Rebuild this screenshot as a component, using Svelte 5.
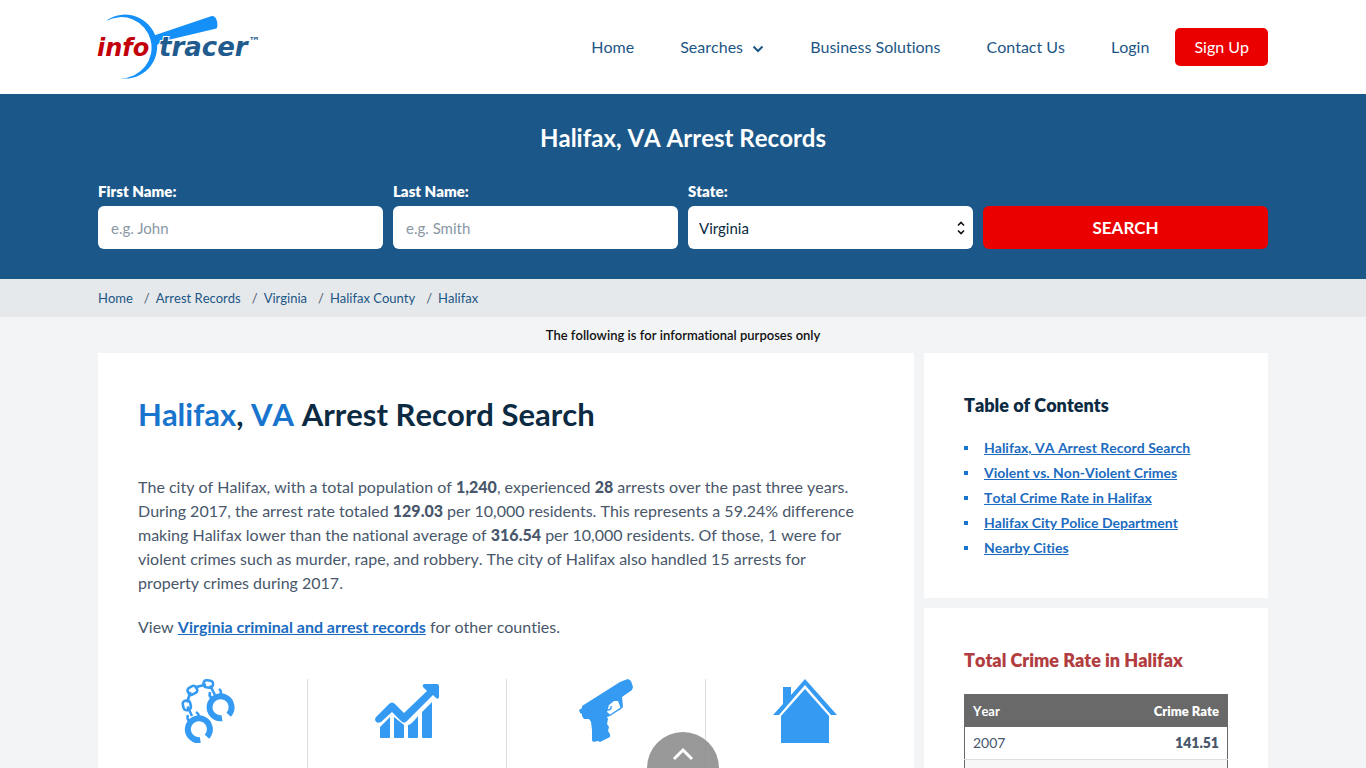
<script lang="ts">
  const crumbs = ["Home", "Arrest Records", "Virginia", "Halifax County", "Halifax"];

  const contents = [
    "Halifax, VA Arrest Record Search",
    "Violent vs. Non-Violent Crimes",
    "Total Crime Rate in Halifax",
    "Halifax City Police Department",
    "Nearby Cities",
  ];

  let firstName = $state("");
  let lastName = $state("");
  let region = $state("Virginia");

  function toTop() {
    window.scrollTo({ top: 0, behavior: "smooth" });
  }
</script>

<header class="header">
  <div class="container header-inner">
    <a class="logo" href="/" aria-label="infotracer">
      <svg width="164" height="66" viewBox="0 0 164 66">
        <g fill="#1590f8">
          <path d="M8 7A32 32 0 1 1 22.7 64.3A30.6 30.6 0 1 0 8 7Z" />
          <path d="M56 21.5L113 2.2Q117 1.4 118.6 6Q120.4 12 118.5 14.5L70 26Q60 28 58 33Z" />
        </g>
        <text class="logo-text" x="-1" y="42" font-size="24" fill="#c30009">info</text>
        <text class="logo-text" x="61" y="42" font-size="26" fill="#215b8e">tracer</text>
        <text class="logo-text tm" x="151" y="31" font-size="11" fill="#215b8e">™</text>
      </svg>
    </a>
    <nav class="nav">
      <a href="#home">Home</a>
      <a href="#searches">
        Searches
        <svg class="chevron" width="12" height="8" viewBox="0 0 12 8">
          <path d="M1.5 1.5L6 6L10.5 1.5" fill="none" stroke="#1c5686" stroke-width="2" />
        </svg>
      </a>
      <a href="#business">Business Solutions</a>
      <a href="#contact">Contact Us</a>
      <a href="#login">Login</a>
    </nav>
    <a class="sign-up" href="#signup">Sign Up</a>
  </div>
</header>

<section class="hero">
  <div class="container">
    <h2>Halifax, VA Arrest Records</h2>
    <form class="search" onsubmit={(e) => e.preventDefault()}>
      <div class="field">
        <label for="first-name">First Name:</label>
        <input id="first-name" type="text" placeholder="e.g. John" bind:value={firstName} />
      </div>
      <div class="field">
        <label for="last-name">Last Name:</label>
        <input id="last-name" type="text" placeholder="e.g. Smith" bind:value={lastName} />
      </div>
      <div class="field">
        <label for="region">State:</label>
        <div class="select-wrap">
          <select id="region" bind:value={region}>
            <option>Virginia</option>
          </select>
          <svg class="arrows" width="8" height="14" viewBox="0 0 8 14">
            <path d="M1 4.5L4 1.5L7 4.5M1 9.5L4 12.5L7 9.5" fill="none" stroke="#111" stroke-width="1.6" />
          </svg>
        </div>
      </div>
      <button class="search-btn" type="submit">SEARCH</button>
    </form>
  </div>
</section>

<nav class="crumbs">
  <ol class="container">
    {#each crumbs as crumb}
      <li><a href="#top">{crumb}</a></li>
    {/each}
  </ol>
</nav>

<p class="notice">The following is for informational purposes only</p>

<div class="container layout">
  <main class="card">
    <h1><span>Halifax</span>, <span>VA</span> Arrest Record Search</h1>
    <p>
      The city of Halifax, with a total population of <b>1,240</b>, experienced <b>28</b> arrests over
      the past three years. During 2017, the arrest rate totaled <b>129.03</b> per 10,000 residents.
      This represents a 59.24% difference making Halifax lower than the national average of
      <b>316.54</b> per 10,000 residents. Of those, 1 were for violent crimes such as murder, rape, and
      robbery. The city of Halifax also handled 15 arrests for property crimes during 2017.
    </p>
    <p>View <a href="#virginia">Virginia criminal and arrest records</a> for other counties.</p>

    <div class="stats">
      <div class="stat">
        <svg width="64" height="64" viewBox="0 0 64 64">
          <g fill="none" stroke="#359bf2" stroke-width="6">
            <path d="M46 39.200A11 11 0 1 1 52.700 35.700" />
            <path d="M24.300 61.200A11 11 0 1 1 31 57.700" />
            <g stroke-width="2.6">
              <rect x="27.500" y="1.500" width="9.500" height="7" rx="3" transform="rotate(8 32.500 5)" />
              <rect x="11.500" y="7.500" width="9.500" height="7.500" rx="3" transform="rotate(-28 16.500 11)" />
              <rect x="7" y="21.500" width="7.500" height="9.500" rx="3" transform="rotate(-12 11.200 26)" />
              <path d="M18.500 8.500L30 5.500M14.500 13L11 23.500M11.500 27.500L16 37M34 6.500L39 16" />
              <path d="M34 13Q32.500 18 37 20M43 10Q47 13 43 17M12 36Q10 41 15 43M20 33Q25 36 21 41" />
            </g>
          </g>
        </svg>
      </div>
      <div class="stat">
        <svg width="64" height="64" viewBox="0 0 64 64">
          <g fill="#359bf2">
            <path d="M5 48L15 38V58Q15 59 14 59H6Q5 59 5 58ZM19 38L29 46V58Q29 59 28 59H20Q19 59 19 58ZM33 46Q36 46 43 37V58Q43 59 42 59H34Q33 59 33 58ZM47 33L57 23V58Q57 59 56 59H48Q47 59 47 58Z" />
            <path d="M49 5H62Q64 5 64 7V18Q63.500 21 61 19L58 16L32 42Q29 45 26 42L17 33L6 43Q2 45 .5 42Q-.5 40 1 38L14 25Q17 22 20 25L29 34L52 12L48 8Q47 6 49 5Z" />
          </g>
        </svg>
      </div>
      <div class="stat">
        <svg width="64" height="64" viewBox="-4 0 64 64">
          <path fill="#359bf2" fill-rule="evenodd" d="M47 1L50 0L53 2L55 8L54 11L44 18L45 28L43 30L32 37L29 38L30 40L29 45L31 48L30 52L32 55V58L22 63L20 62L15 63L14 61V51L13 43L11 40L6 40L4 37L4 35L2 34L1 31L4 29V27L42 3ZM31 26L29 33L32 35.500L42.500 28.500L40 22L36 22Z" />
          <path d="M33 27Q34 31 29 31" fill="none" stroke="#359bf2" stroke-width="1.500" />
        </svg>
      </div>
      <div class="stat">
        <svg width="64" height="64" viewBox="0 0 64 64">
          <path fill="#359bf2" d="M32 0L64 36H58L32 6L6 36H0L10 25V8H18V16ZM32 10L56 37V64H8V37Z" />
        </svg>
      </div>
    </div>
  </main>

  <aside class="sidebar">
    <section class="card">
      <h3>Table of Contents</h3>
      <ul class="toc">
        {#each contents as item}
          <li><a href="#section">{item}</a></li>
        {/each}
      </ul>
    </section>

    <section class="card">
      <h3 class="red">Total Crime Rate in Halifax</h3>
      <table>
        <thead>
          <tr><th>Year</th><th>Crime Rate</th></tr>
        </thead>
        <tbody>
          <tr><td>2007</td><td>141.51</td></tr>
          <tr><td></td><td></td></tr>
        </tbody>
      </table>
    </section>
  </aside>
</div>

<button class="to-top" aria-label="Back to top" onclick={toTop}>
  <svg width="22" height="14" viewBox="0 0 22 14">
    <path d="M2 12L11 3L20 12" fill="none" stroke="#fff" stroke-width="3" />
  </svg>
</button>

<style>
  :global(body) {
    background: #f2f4f6;
    color: #48576b;
    font-family: Lato, "Liberation Sans", sans-serif;
    font-size: 16px;
    font-kerning: none;
    font-variant-ligatures: none;
    line-height: 24px;
  }

  .container {
    box-sizing: border-box;
    width: 100%;
    max-width: 1190px;
    margin: 0 auto;
    padding: 0 10px;
  }

  .header {
    background: #fff;
  }

  .header-inner {
    display: flex;
    align-items: center;
    min-height: 94px;
  }

  .logo {
    margin-right: auto;
  }

  .logo svg {
    display: block;
    overflow: visible;
  }

  .logo-text {
    font-family: "DejaVu Sans", sans-serif;
    font-style: italic;
    font-weight: 700;
    paint-order: stroke;
    stroke: #fff;
    stroke-width: 2px;
  }

  .tm {
    stroke-width: 0;
  }

  .nav {
    display: flex;
    gap: 46px;
  }

  .nav a {
    color: #1c5686;
    text-decoration: none;
  }

  .chevron {
    margin-left: 5px;
  }

  .sign-up {
    margin-left: 26px;
    padding: 7px 19px;
    border-radius: 5px;
    background: #eb0000;
    color: #fff;
    text-decoration: none;
  }

  .hero {
    background: #1b5889;
    color: #fff;
    padding: 28px 0 30px;
  }

  h2 {
    margin: 0 0 26px;
    font-size: 24px;
    line-height: 32px;
    text-align: center;
  }

  .search {
    display: grid;
    grid-template-columns: repeat(4, 1fr);
    gap: 10px;
    align-items: end;
  }

  .field label {
    display: block;
    margin-bottom: 4px;
    font-size: 15px;
    font-weight: 800;
    line-height: 22px;
  }

  .field input,
  .field select,
  .search-btn {
    display: block;
    box-sizing: border-box;
    width: 100%;
    height: 43px;
    border: 0;
    border-radius: 6px;
    font-family: inherit;
  }

  .field input,
  .field select {
    appearance: none;
    padding: 0 13px;
    background: #fff;
    color: #0c2a42;
    font-size: 15px;
  }

  .field select {
    padding: 0 11px;
  }

  .field input::placeholder {
    color: #8a97a5;
  }

  .select-wrap {
    position: relative;
  }

  .arrows {
    position: absolute;
    right: 8px;
    top: 15px;
    pointer-events: none;
  }

  .search-btn {
    background: #eb0000;
    color: #fff;
    font-size: 17px;
    font-weight: 700;
  }

  .crumbs {
    background: #e5e9ec;
    font-size: 13px;
    line-height: 38px;
  }

  .crumbs ol {
    display: flex;
    list-style: none;
  }

  .crumbs li + li::before {
    content: "/";
    margin: 0 6px 0 11px;
  }

  .crumbs a {
    color: #1c5686;
    text-decoration: none;
  }

  .notice {
    margin: 0;
    color: #111;
    font-size: 13px;
    font-weight: 600;
    line-height: 36px;
    text-align: center;
  }

  .layout {
    display: grid;
    grid-template-columns: minmax(0, 1fr) 344px;
    gap: 10px;
  }

  .card {
    padding: 40px 40px 38px;
    background: #fff;
  }

  main.card {
    padding-bottom: 0;
  }

  h1 {
    margin: 0 0 40px;
    color: #0c2a42;
    font-size: 31px;
    font-weight: 700;
    line-height: 42px;
  }

  h1 span {
    color: #1874cd;
  }

  main p {
    margin: 0 0 20px;
    padding-right: 10px;
  }

  b {
    font-weight: 900;
  }

  main p a {
    color: #1b6bc0;
    font-weight: 700;
  }

  .stats {
    display: grid;
    grid-template-columns: repeat(4, 1fr);
    margin: 40px -30px 0;
  }

  .stat {
    display: flex;
    justify-content: center;
    min-height: 110px;
  }

  .stat + .stat {
    border-left: 1px solid #dcdfe2;
  }

  .sidebar {
    display: flex;
    flex-direction: column;
    gap: 10px;
  }

  h3 {
    margin: 0 0 17px;
    color: #0c2a42;
    font-size: 18px;
    font-weight: 800;
    line-height: 25px;
  }

  .red {
    margin-bottom: 21px;
    color: #b23d40;
  }

  .toc {
    margin: 0;
    padding: 0;
    list-style: none;
    font-size: 14px;
    font-weight: 700;
    line-height: 25px;
  }

  .toc li {
    display: flex;
    align-items: center;
    gap: 16px;
  }

  .toc li::before {
    content: "";
    width: 4px;
    height: 4px;
    background: #1874cd;
  }

  .toc a {
    color: #1b6bc0;
  }

  table {
    width: 100%;
    border: 1px solid #696969;
    border-collapse: collapse;
    font-size: 14px;
    line-height: 16px;
  }

  th,
  td {
    height: 16px;
    padding: 8px;
    text-align: left;
  }

  th {
    background: #696969;
    color: #fff;
    font-size: 13px;
  }

  td {
    border-bottom: 1px solid #dcdfe2;
  }

  th:last-child,
  td:last-child {
    text-align: right;
    font-weight: 800;
  }

  tbody tr:nth-child(even) {
    background: #f7f7f7;
  }

  .to-top {
    position: fixed;
    bottom: 0;
    left: 50%;
    width: 72px;
    height: 36px;
    margin-left: -36px;
    padding: 10px 0 0;
    border: 0;
    border-radius: 36px 36px 0 0;
    background: rgba(128, 128, 128, 0.8);
  }
</style>
